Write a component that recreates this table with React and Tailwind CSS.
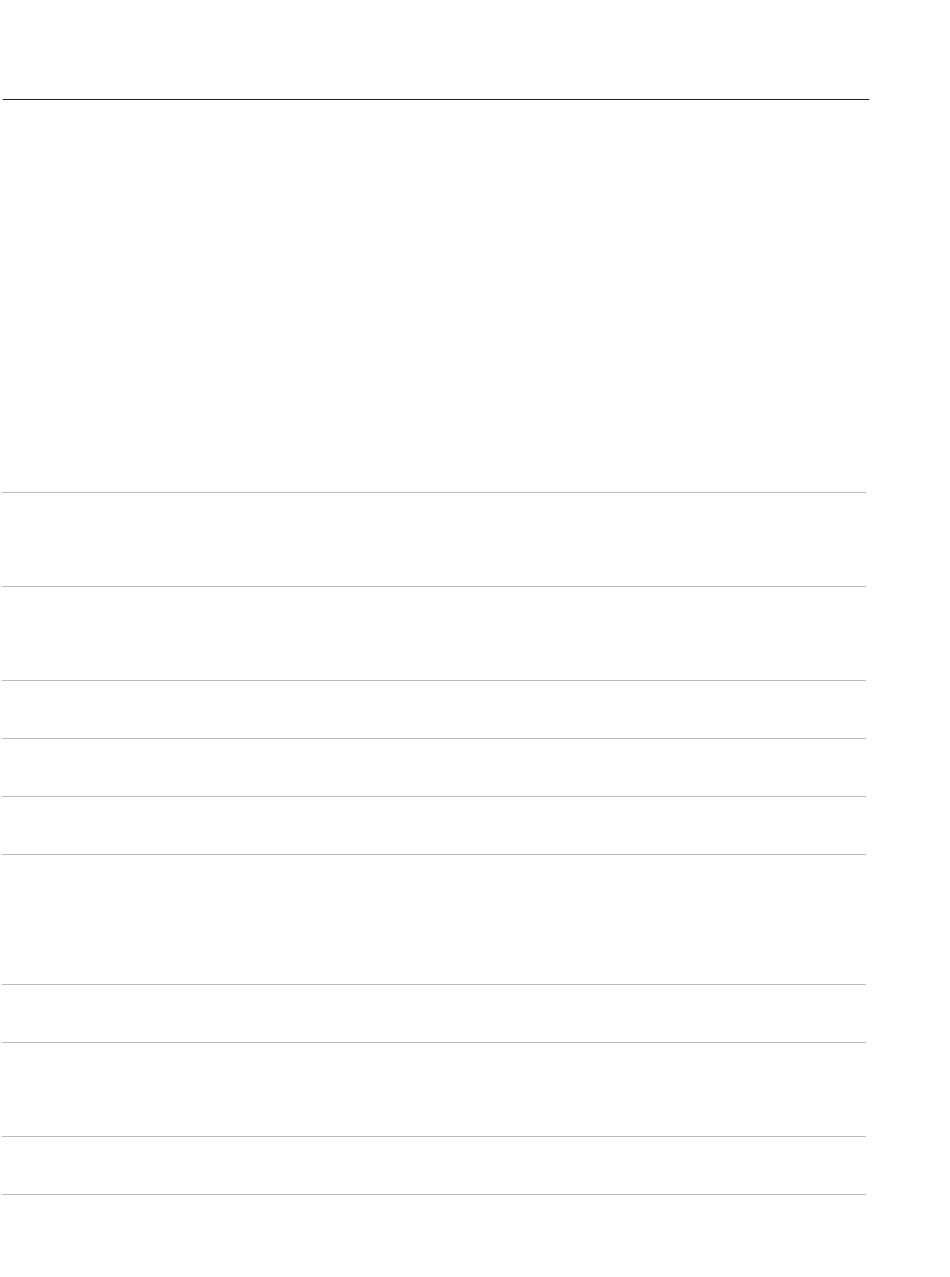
import React from 'react';

// empty table skeleton: header rule + row separators
const rows = [94, 94, 58, 58, 58, 130, 58, 94, 58];

const App = () => {
    return (
        <div className="min-h-screen bg-white" style={{ fontFamily: '"Liberation Sans", Arial, sans-serif' }}>
            <div className="h-[100px] ml-[3px] w-[866px] border-b border-[#1f1f1f]" />
            <div className="h-[392px]" />
            <div className="ml-[2px] w-[864px]">
                {rows.map((h, i) => (
                    <div key={i} className="border-t border-[#bcbcbc]" style={{ height: h }} />
                ))}
                <div className="border-t border-[#bcbcbc]" />
            </div>
        </div>
    );
};

export default App;
